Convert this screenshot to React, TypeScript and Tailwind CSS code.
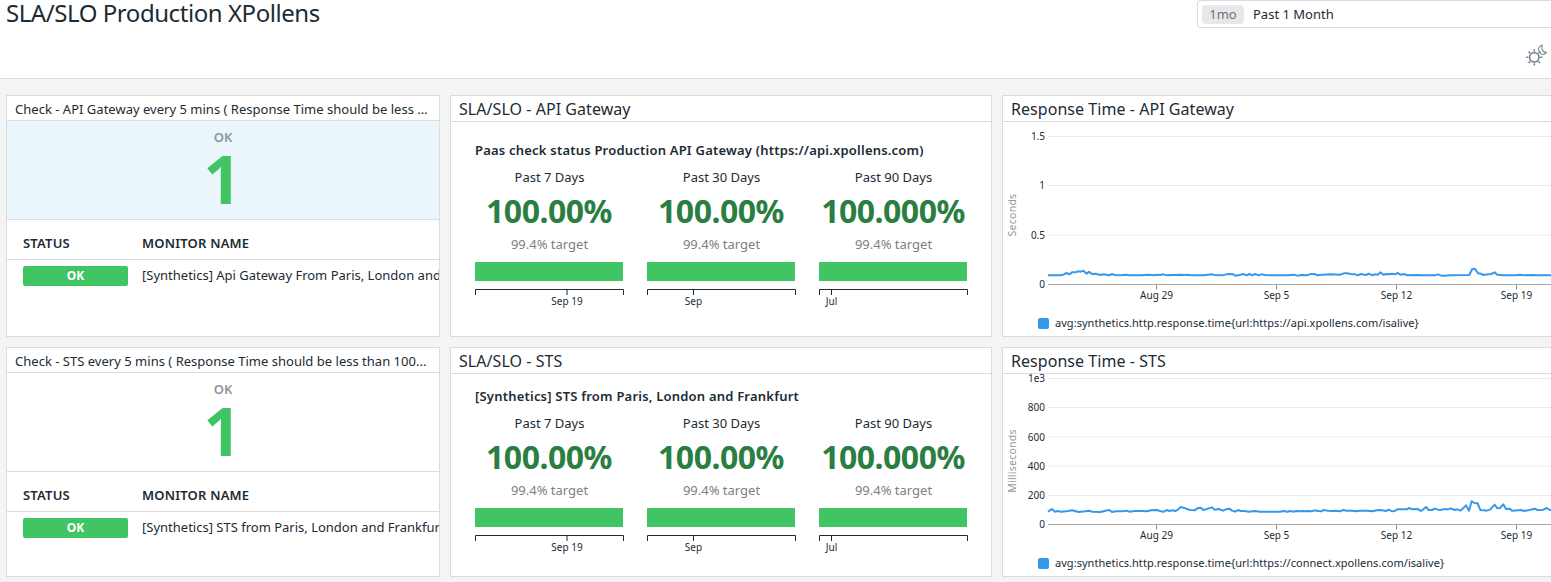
import type { ReactNode } from 'react';

function DayNightIcon() {
  return (
    <svg width="22" height="24" viewBox="0 0 22 24" fill="none" stroke="#7b858f" className="shrink-0">
      <circle cx="9.3" cy="14.3" r="4.7" strokeWidth="1.7" />
      <path
        strokeWidth="1.6"
        d="M9.3 6.2v2.2M9.3 20.2v2.2M1.2 14.3h2.2M15.2 14.3h2.2M3.6 8.6l1.6 1.6M13.4 18.4l1.6 1.6M3.6 20l1.6-1.6M13.4 10.2l1.4-1.4"
      />
      <path strokeWidth="1.1" d="M17.2 2.2C14.6 3 13.2 5.2 13.7 7.4C15 8.6 15.9 9.7 16 11.1C18.3 11.9 20.4 11.1 21.4 9.4C18.2 9.6 16 6.2 17.2 2.2Z" />
    </svg>
  );
}

function Card({ title, small, className, children }: { title: string; small?: boolean; className: string; children: ReactNode }) {
  return (
    <section className={`flex flex-col overflow-hidden border border-[#dcdcde] bg-white ${className}`}>
      <h2
        className={
          small
            ? 'h-[25px] shrink-0 border-b border-[#dcdcde] pl-2 text-[13px] leading-[26px] tracking-[0.015px] whitespace-nowrap'
            : 'h-[26px] shrink-0 border-b border-[#dcdcde] pl-2 text-base leading-[26px] tracking-[0.05px] whitespace-nowrap'
        }
      >
        {title}
      </h2>
      {children}
    </section>
  );
}

function MonitorCard({ title, monitor, highlighted, className }: { title: string; monitor: string; highlighted?: boolean; className: string }) {
  return (
    <Card title={title} small className={className}>
      <div className={`flex h-[99px] shrink-0 flex-col items-center border-b border-[#dcdcde] pt-[7px] ${highlighted ? 'bg-[#eaf5fc]' : 'bg-white'}`}>
        <span className="text-[13px] leading-[18px] font-semibold text-[#8f96a0]">OK</span>
        <span className="-ml-[1px] text-[66px] leading-[65px] font-bold text-[#41c464]">1</span>
      </div>
      <div className="flex h-10 shrink-0 items-center border-b border-[#dcdcde] pt-[8px] pl-4 text-[13px] font-semibold tracking-[0.2px]">
        <span className="w-[119px]">STATUS</span>
        <span>MONITOR NAME</span>
      </div>
      <div className="flex shrink-0 items-start pt-[6px] pl-4 text-[13px] whitespace-nowrap">
        <span className="mr-[14px] h-5 w-[105px] shrink-0 rounded-[2px] bg-[#41c464] text-center text-xs leading-5 font-bold text-white">OK</span>
        <span className="leading-[18px]">{monitor}</span>
      </div>
    </Card>
  );
}

const periods = [
  { label: 'Past 7 Days', value: '100.00%', tick: 'Sep 19', at: 92 },
  { label: 'Past 30 Days', value: '100.00%', tick: 'Sep', at: 46.5 },
  { label: 'Past 90 Days', value: '100.000%', tick: 'Jul', at: 12.5 },
];

function SloCard({ title, name, className, bodyClass }: { title: string; name: string; className: string; bodyClass: string }) {
  return (
    <Card title={title} className={className}>
      <div className={`pl-6 ${bodyClass}`}>
        <h3 className="text-[13px] leading-[18px] font-semibold tracking-[0.21px] whitespace-nowrap">{name}</h3>
        <div className="mt-[9px] flex gap-[23px]">
          {periods.map((p) => (
            <div key={p.label} className="flex w-[149px] flex-col">
              <span className="text-center text-[13px] leading-[18px]">{p.label}</span>
              <span className="mt-[4px] mr-px text-center text-[32px] leading-[42px] font-bold tracking-[-0.5px] text-[#2a7e41]">{p.value}</span>
              <span className="mt-[3px] text-center text-[13px] leading-[18px] text-[#7c7f85]">99.4% target</span>
              <div className="mt-[9px] mr-px h-[19px] bg-[#41c464]" />
              <svg width="149" height="28" viewBox="0 0 149 28" className="mt-[8px] overflow-visible">
                <path d="M0.5 6V0.5H148.5V6" fill="none" stroke="#1c2b34" />
                <path d={`M${p.at} 0.5V6`} stroke="#1c2b34" />
                <text x={p.at} y="16" textAnchor="middle" fontSize="10" fill="#1c2b34">
                  {p.tick}
                </text>
              </svg>
            </div>
          ))}
        </div>
      </div>
    </Card>
  );
}

type ChartProps = {
  unit: string;
  unitY: number;
  height: number;
  grid: { y: number; label: string }[];
  offset: number;
  points: string;
};

const dates = [
  { x: 153.5, label: 'Aug 29' },
  { x: 273.5, label: 'Sep 5' },
  { x: 393.5, label: 'Sep 12' },
  { x: 513.5, label: 'Sep 19' },
];

function Chart({ unit, unitY, height, grid, offset, points }: ChartProps) {
  const base = grid[grid.length - 1].y;
  return (
    <svg width="548" height={height} viewBox={`0 0 548 ${height}`} className="block shrink-0">
      <text transform={`translate(13 ${unitY}) rotate(-90)`} textAnchor="middle" fontSize="10.5" letterSpacing="0.25" fill="#93979d">
        {unit}
      </text>
      {grid.map((g) => (
        <g key={g.label}>
          <path d={`M45 ${g.y}H548`} stroke={g.y === base ? '#a9a9a9' : '#ebebeb'} />
          <text x="42" y={g.y + 3.7} textAnchor="end" fontSize="10" fill="#1c2b34">
            {g.label}
          </text>
        </g>
      ))}
      {dates.map((d) => (
        <g key={d.label}>
          <path d={`M${d.x} ${base}v5`} stroke="#8a8a8a" />
          <text x={d.x} y={base + 14.5} textAnchor="middle" fontSize="10" fill="#1c2b34">
            {d.label}
          </text>
        </g>
      ))}
      <polyline
        transform={`translate(-3 ${offset}) scale(0.333333)`}
        points={points}
        fill="none"
        stroke="#3598ec"
        strokeWidth="6"
        strokeLinejoin="round"
      />
    </svg>
  );
}

function Legend({ text }: { text: string }) {
  return (
    <div className="flex items-center gap-[6px] pl-[35px] text-[11px] leading-[16px] tracking-[0.04px] whitespace-nowrap">
      <span className="size-[11px] rounded-[2px] bg-[#3598ec]" />
      <span>{text}</span>
    </div>
  );
}

const gatewayPoints =
  '144,556 180,556 190,554 200,549 208,553 216,547 226,547 234,544 242,545 250,542 260,551 267,545 276,552 286,551 302,555 310,553 328,556 336,552 344,555 364,556 378,554 388,556 424,556 444,554 460,556 472,554 480,555 490,553 500,556 520,555 540,554 550,555 562,554 572,556 612,556 634,553 644,555 668,556 678,553 698,552 706,557 718,555 730,552 740,556 748,552 756,556 766,552 776,556 784,553 796,555 810,556 864,556 882,554 892,557 904,555 920,556 932,552 944,552 952,556 966,554 992,553 1020,554 1032,550 1042,550 1052,552 1066,553 1074,556 1082,552 1098,555 1107,551 1117,556 1124,553 1134,554 1141,547 1150,554 1158,552 1168,553 1176,551 1186,553 1192,549 1202,554 1212,552 1222,556 1254,555 1262,556 1304,556 1314,553 1324,557 1334,557 1350,556 1408,555 1416,538 1425,536 1434,550 1442,551 1450,555 1464,553 1474,552 1484,547 1492,554 1502,555 1510,556 1546,556 1560,554 1572,556 1596,555 1610,556 1660,556';

const stsPoints =
  '144,515 156,507 164,515 172,513 184,515 204,513 216,511 236,516 256,514 266,512 278,515 302,516 316,512 328,510 336,516 348,514 366,514 380,512 388,515 404,513 430,513 440,514 454,511 472,510 482,514 492,515 500,510 508,513 518,511 526,513 534,509 542,501 556,505 570,510 584,511 592,505 602,503 610,510 618,508 626,505 636,502 644,509 656,507 670,512 678,508 688,506 696,512 706,515 714,510 722,513 734,513 746,515 764,513 780,515 840,515 850,513 862,515 870,513 882,515 888,513 898,514 908,513 916,514 926,513 934,514 944,511 954,513 964,514 970,510 984,512 996,513 1006,512 1020,514 1030,510 1040,512 1056,512 1066,514 1080,512 1100,512 1118,514 1130,511 1142,510 1158,513 1166,509 1176,514 1184,513 1192,508 1220,508 1228,504 1236,508 1254,507 1262,513 1270,508 1278,501 1286,510 1296,510 1304,506 1314,509 1322,510 1330,508 1344,508 1352,505 1364,510 1372,508 1382,512 1398,496 1407,512 1415,484 1423,489 1433,490 1441,510 1451,511 1460,512 1470,509 1484,494 1492,505 1500,504 1510,493 1518,507 1528,506 1536,512 1564,510 1572,513 1588,510 1604,506 1612,510 1630,509 1640,504 1650,510 1660,509';

export default function App() {
  return (
    <div className="flex h-[582px] w-full flex-col overflow-hidden bg-[#f4f4f4] font-['Noto_Sans',sans-serif] text-[#1c2b34]">
      <header className="flex h-[79px] shrink-0 justify-between border-b border-[#dcdcde] bg-white">
        <h1 className="pl-[6px] text-2xl leading-[26px] tracking-[-0.44px] whitespace-nowrap">SLA/SLO Production XPollens</h1>
        <div className="flex w-[354px] flex-col">
          <div className="flex h-[28px] items-center rounded-l-[4px] border border-r-0 border-[#dcdcde] pl-1 text-[13px]">
            <span className="mr-[9px] flex h-[19px] w-[42px] items-center justify-center rounded-[4px] bg-[#e8e8ea] pt-px text-[#6b7380]">1mo</span>
            <span className="pt-px">Past 1 Month</span>
          </div>
          <div className="mt-[15px] flex justify-end pr-[4px]">
            <DayNightIcon />
          </div>
        </div>
      </header>
      <main className="grid shrink-0 grid-cols-[434px_542px_549px] grid-rows-[242px_230px] gap-[10px] pt-4 pl-[6px]">
        <MonitorCard
          title="Check - API Gateway every 5 mins ( Response Time should be less ..."
          monitor="[Synthetics] Api Gateway From Paris, London and Frankfurt"
          highlighted
          className=""
        />
        <SloCard title="SLA/SLO - API Gateway" name="Paas check status Production API Gateway (https://api.xpollens.com)" className="" bodyClass="pt-[19px]" />
        <Card title="Response Time - API Gateway" className="border-r-0">
          <Chart
            unit="Seconds"
            unitY={93}
            height={193}
            offset={-32}
            points={gatewayPoints}
            grid={[
              { y: 14.5, label: '1.5' },
              { y: 63.5, label: '1' },
              { y: 113, label: '0.5' },
              { y: 162.5, label: '0' },
            ]}
          />
          <Legend text="avg:synthetics.http.response.time{url:https://api.xpollens.com/isalive}" />
        </Card>
        <MonitorCard
          title="Check - STS every 5 mins ( Response Time should be less than 100..."
          monitor="[Synthetics] STS from Paris, London and Frankfurt"
          className=""
        />
        <SloCard title="SLA/SLO - STS" name="[Synthetics] STS from Paris, London and Frankfurt" className="" bodyClass="pt-[13px]" />
        <Card title="Response Time - STS" className="border-r-0">
          <Chart
            unit="Milliseconds"
            unitY={87}
            height={181}
            offset={-34}
            points={stsPoints}
            grid={[
              { y: 4.5, label: '1e3' },
              { y: 33.5, label: '800' },
              { y: 63, label: '600' },
              { y: 92, label: '400' },
              { y: 121.5, label: '200' },
              { y: 150.5, label: '0' },
            ]}
          />
          <Legend text="avg:synthetics.http.response.time{url:https://connect.xpollens.com/isalive}" />
        </Card>
      </main>
    </div>
  );
}
